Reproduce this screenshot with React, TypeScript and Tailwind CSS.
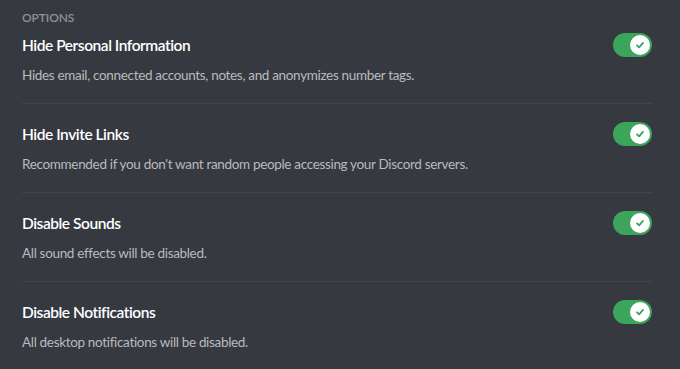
import React from "react";

const rows = [
  { title: "Hide Personal Information", desc: "Hides email, connected accounts, notes, and anonymizes number tags." },
  { title: "Hide Invite Links", desc: "Recommended if you don't want random people accessing your Discord servers." },
  { title: "Disable Sounds", desc: "All sound effects will be disabled." },
  { title: "Disable Notifications", desc: "All desktop notifications will be disabled." },
];

function Toggle() {
  return (
    <div className="flex h-6 w-[39px] shrink-0 items-center justify-end rounded-full bg-[#3ba55c] pr-[2px]">
      <div className="flex h-5 w-5 items-center justify-center rounded-full bg-white">
        <svg width="12" height="12" viewBox="0 0 20 20" fill="none">
          <path d="M5 10.5 L8.5 14 L15 6.5" stroke="#3ba55c" strokeWidth="3" strokeLinecap="round" strokeLinejoin="round" />
        </svg>
      </div>
    </div>
  );
}

export default function App() {
  return (
    <div
      className="h-[369px] w-[680px] overflow-hidden bg-[#36393f] pl-[22px] pr-[28px] pt-[10px]"
      style={{ fontFamily: 'Lato, "Noto Sans", sans-serif' }}
    >
      <div className="text-[12px] font-semibold uppercase leading-4 tracking-[-0.1px] text-[#8e9297]">Options</div>
      <div className="mt-[7px]">
        {rows.map((r, i) => (
          <div key={r.title} className={i > 0 ? "pt-[18px]" : ""}>
            <div className="flex h-6 items-center justify-between">
              <div className="text-[15.5px] font-semibold leading-5 tracking-[-0.45px] text-[#ffffff]">{r.title}</div>
              <Toggle />
            </div>
            <div className="mt-2 text-[13.5px] leading-5 tracking-[-0.33px] text-[#b9bbbe]">{r.desc}</div>
            <div className="mt-[18px] border-t border-[#42454a]" />
          </div>
        ))}
      </div>
    </div>
  );
}
